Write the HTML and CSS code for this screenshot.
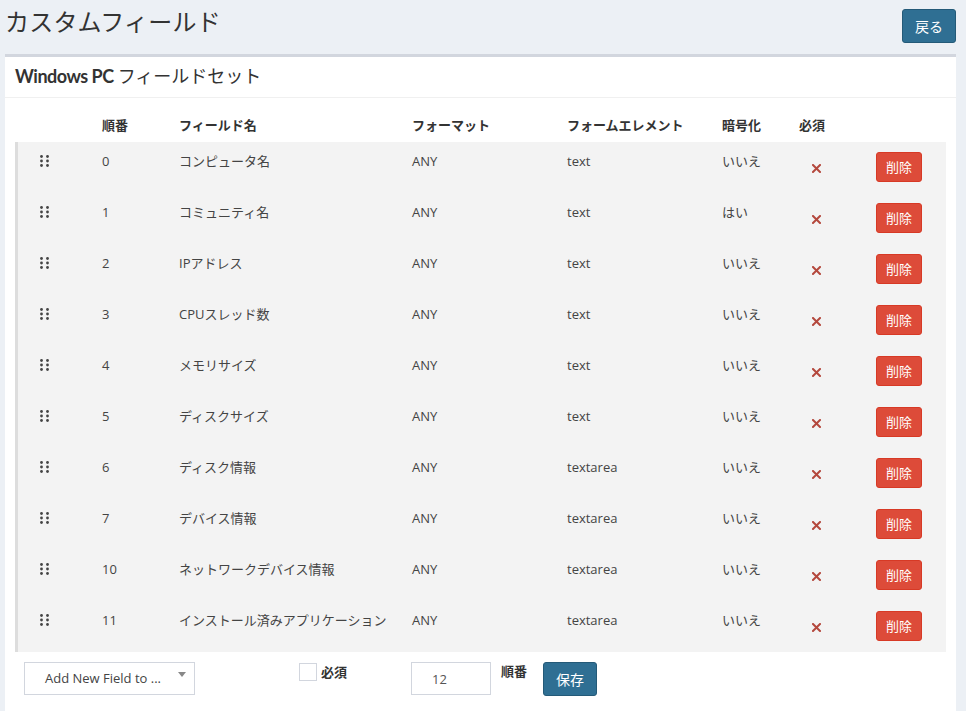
FILE: index.html
```html
<!DOCTYPE html>
<html lang="ja">
<head>
<meta charset="utf-8">
<title>カスタムフィールド</title>
<link rel="stylesheet" href="styles.css">
</head>
<body>
<div class="page">
  <div class="page-head">
    <h1 class="page-title">カスタムフィールド</h1>
    <a class="btn btn-primary btn-back" href="#">戻る</a>
  </div>
  <div class="box">
    <div class="box-header">
      <h2 class="box-title"><span class="latin-bold">Windows PC</span> フィールドセット</h2>
    </div>
    <div class="box-body">
      <div class="grid-row head-row">
        <div></div>
        <div>順番</div>
        <div>フィールド名</div>
        <div>フォーマット</div>
        <div>フォームエレメント</div>
        <div>暗号化</div>
        <div>必須</div>
        <div></div>
      </div>
      <div class="rows">
        <div class="grid-row item">
          <div class="drag"><svg width="10" height="12" viewBox="0 0 10 12"><g fill="#444"><circle cx="1.5" cy="1.5" r="1.4"/><circle cx="7.5" cy="1.5" r="1.4"/><circle cx="1.5" cy="6" r="1.4"/><circle cx="7.5" cy="6" r="1.4"/><circle cx="1.5" cy="10.5" r="1.4"/><circle cx="7.5" cy="10.5" r="1.4"/></g></svg></div>
          <div>0</div><div>コンピュータ名</div><div>ANY</div><div>text</div><div>いいえ</div>
          <div class="req"><svg width="9" height="9" viewBox="0 0 9 9"><path d="M1 1L8 8M8 1L1 8" stroke="#b4483d" stroke-width="2" stroke-linecap="square"/></svg></div>
          <div><a class="btn btn-danger" href="#">削除</a></div>
        </div>
        <div class="grid-row item">
          <div class="drag"><svg width="10" height="12" viewBox="0 0 10 12"><g fill="#444"><circle cx="1.5" cy="1.5" r="1.4"/><circle cx="7.5" cy="1.5" r="1.4"/><circle cx="1.5" cy="6" r="1.4"/><circle cx="7.5" cy="6" r="1.4"/><circle cx="1.5" cy="10.5" r="1.4"/><circle cx="7.5" cy="10.5" r="1.4"/></g></svg></div>
          <div>1</div><div>コミュニティ名</div><div>ANY</div><div>text</div><div>はい</div>
          <div class="req"><svg width="9" height="9" viewBox="0 0 9 9"><path d="M1 1L8 8M8 1L1 8" stroke="#b4483d" stroke-width="2" stroke-linecap="square"/></svg></div>
          <div><a class="btn btn-danger" href="#">削除</a></div>
        </div>
        <div class="grid-row item">
          <div class="drag"><svg width="10" height="12" viewBox="0 0 10 12"><g fill="#444"><circle cx="1.5" cy="1.5" r="1.4"/><circle cx="7.5" cy="1.5" r="1.4"/><circle cx="1.5" cy="6" r="1.4"/><circle cx="7.5" cy="6" r="1.4"/><circle cx="1.5" cy="10.5" r="1.4"/><circle cx="7.5" cy="10.5" r="1.4"/></g></svg></div>
          <div>2</div><div>IPアドレス</div><div>ANY</div><div>text</div><div>いいえ</div>
          <div class="req"><svg width="9" height="9" viewBox="0 0 9 9"><path d="M1 1L8 8M8 1L1 8" stroke="#b4483d" stroke-width="2" stroke-linecap="square"/></svg></div>
          <div><a class="btn btn-danger" href="#">削除</a></div>
        </div>
        <div class="grid-row item">
          <div class="drag"><svg width="10" height="12" viewBox="0 0 10 12"><g fill="#444"><circle cx="1.5" cy="1.5" r="1.4"/><circle cx="7.5" cy="1.5" r="1.4"/><circle cx="1.5" cy="6" r="1.4"/><circle cx="7.5" cy="6" r="1.4"/><circle cx="1.5" cy="10.5" r="1.4"/><circle cx="7.5" cy="10.5" r="1.4"/></g></svg></div>
          <div>3</div><div>CPUスレッド数</div><div>ANY</div><div>text</div><div>いいえ</div>
          <div class="req"><svg width="9" height="9" viewBox="0 0 9 9"><path d="M1 1L8 8M8 1L1 8" stroke="#b4483d" stroke-width="2" stroke-linecap="square"/></svg></div>
          <div><a class="btn btn-danger" href="#">削除</a></div>
        </div>
        <div class="grid-row item">
          <div class="drag"><svg width="10" height="12" viewBox="0 0 10 12"><g fill="#444"><circle cx="1.5" cy="1.5" r="1.4"/><circle cx="7.5" cy="1.5" r="1.4"/><circle cx="1.5" cy="6" r="1.4"/><circle cx="7.5" cy="6" r="1.4"/><circle cx="1.5" cy="10.5" r="1.4"/><circle cx="7.5" cy="10.5" r="1.4"/></g></svg></div>
          <div>4</div><div>メモリサイズ</div><div>ANY</div><div>text</div><div>いいえ</div>
          <div class="req"><svg width="9" height="9" viewBox="0 0 9 9"><path d="M1 1L8 8M8 1L1 8" stroke="#b4483d" stroke-width="2" stroke-linecap="square"/></svg></div>
          <div><a class="btn btn-danger" href="#">削除</a></div>
        </div>
        <div class="grid-row item">
          <div class="drag"><svg width="10" height="12" viewBox="0 0 10 12"><g fill="#444"><circle cx="1.5" cy="1.5" r="1.4"/><circle cx="7.5" cy="1.5" r="1.4"/><circle cx="1.5" cy="6" r="1.4"/><circle cx="7.5" cy="6" r="1.4"/><circle cx="1.5" cy="10.5" r="1.4"/><circle cx="7.5" cy="10.5" r="1.4"/></g></svg></div>
          <div>5</div><div>ディスクサイズ</div><div>ANY</div><div>text</div><div>いいえ</div>
          <div class="req"><svg width="9" height="9" viewBox="0 0 9 9"><path d="M1 1L8 8M8 1L1 8" stroke="#b4483d" stroke-width="2" stroke-linecap="square"/></svg></div>
          <div><a class="btn btn-danger" href="#">削除</a></div>
        </div>
        <div class="grid-row item">
          <div class="drag"><svg width="10" height="12" viewBox="0 0 10 12"><g fill="#444"><circle cx="1.5" cy="1.5" r="1.4"/><circle cx="7.5" cy="1.5" r="1.4"/><circle cx="1.5" cy="6" r="1.4"/><circle cx="7.5" cy="6" r="1.4"/><circle cx="1.5" cy="10.5" r="1.4"/><circle cx="7.5" cy="10.5" r="1.4"/></g></svg></div>
          <div>6</div><div>ディスク情報</div><div>ANY</div><div>textarea</div><div>いいえ</div>
          <div class="req"><svg width="9" height="9" viewBox="0 0 9 9"><path d="M1 1L8 8M8 1L1 8" stroke="#b4483d" stroke-width="2" stroke-linecap="square"/></svg></div>
          <div><a class="btn btn-danger" href="#">削除</a></div>
        </div>
        <div class="grid-row item">
          <div class="drag"><svg width="10" height="12" viewBox="0 0 10 12"><g fill="#444"><circle cx="1.5" cy="1.5" r="1.4"/><circle cx="7.5" cy="1.5" r="1.4"/><circle cx="1.5" cy="6" r="1.4"/><circle cx="7.5" cy="6" r="1.4"/><circle cx="1.5" cy="10.5" r="1.4"/><circle cx="7.5" cy="10.5" r="1.4"/></g></svg></div>
          <div>7</div><div>デバイス情報</div><div>ANY</div><div>textarea</div><div>いいえ</div>
          <div class="req"><svg width="9" height="9" viewBox="0 0 9 9"><path d="M1 1L8 8M8 1L1 8" stroke="#b4483d" stroke-width="2" stroke-linecap="square"/></svg></div>
          <div><a class="btn btn-danger" href="#">削除</a></div>
        </div>
        <div class="grid-row item">
          <div class="drag"><svg width="10" height="12" viewBox="0 0 10 12"><g fill="#444"><circle cx="1.5" cy="1.5" r="1.4"/><circle cx="7.5" cy="1.5" r="1.4"/><circle cx="1.5" cy="6" r="1.4"/><circle cx="7.5" cy="6" r="1.4"/><circle cx="1.5" cy="10.5" r="1.4"/><circle cx="7.5" cy="10.5" r="1.4"/></g></svg></div>
          <div>10</div><div>ネットワークデバイス情報</div><div>ANY</div><div>textarea</div><div>いいえ</div>
          <div class="req"><svg width="9" height="9" viewBox="0 0 9 9"><path d="M1 1L8 8M8 1L1 8" stroke="#b4483d" stroke-width="2" stroke-linecap="square"/></svg></div>
          <div><a class="btn btn-danger" href="#">削除</a></div>
        </div>
        <div class="grid-row item">
          <div class="drag"><svg width="10" height="12" viewBox="0 0 10 12"><g fill="#444"><circle cx="1.5" cy="1.5" r="1.4"/><circle cx="7.5" cy="1.5" r="1.4"/><circle cx="1.5" cy="6" r="1.4"/><circle cx="7.5" cy="6" r="1.4"/><circle cx="1.5" cy="10.5" r="1.4"/><circle cx="7.5" cy="10.5" r="1.4"/></g></svg></div>
          <div>11</div><div>インストール済みアプリケーション</div><div>ANY</div><div>textarea</div><div>いいえ</div>
          <div class="req"><svg width="9" height="9" viewBox="0 0 9 9"><path d="M1 1L8 8M8 1L1 8" stroke="#b4483d" stroke-width="2" stroke-linecap="square"/></svg></div>
          <div><a class="btn btn-danger" href="#">削除</a></div>
        </div>
      </div>
      <form class="add-form">
        <div class="select">
          <span class="select-text">Add New Field to ...</span>
          <span class="select-arrow"></span>
        </div>
        <label class="check-group"><span class="checkbox"></span><span class="bold-label">必須</span></label>
        <div class="order-input">12</div>
        <span class="bold-label order-label">順番</span>
        <button class="btn btn-primary btn-save" type="button">保存</button>
      </form>
    </div>
  </div>
</div>
</body>
</html>
```
FILE: styles.css
```css
* { box-sizing: border-box; }
html, body { margin: 0; padding: 0; }
body {
  background: #ecf0f5;
  font-family: "Open Sans", "Noto Sans CJK JP", sans-serif;
  font-size: 13px;
  color: #333;
  width: 966px;
  height: 711px;
  overflow: hidden;
}
.page { padding: 0 10px 0 5px; }
.page-head {
  display: flex;
  justify-content: space-between;
  align-items: flex-start;
  height: 54px;
}
.page-title {
  margin: 4px 0 0;
  font-family: "Noto Sans CJK JP", sans-serif;
  font-weight: 400;
  font-size: 24px;
  line-height: 34px;
  color: #333;
  letter-spacing: 0.2px;
}
.btn {
  display: inline-flex;
  align-items: center;
  justify-content: center;
  border-radius: 3px;
  color: #fff;
  text-decoration: none;
  font-family: "Noto Sans CJK JP", sans-serif;
  border: 1px solid transparent;
}
.btn-primary { background: #2f6f93; border-color: #245a78; }
.btn-back { margin-top: 9px; width: 54px; height: 34px; font-size: 14px; }
.box {
  background: #fff;
  border-top: 3px solid #d2d6de;
  height: 660px;
}
.box-header {
  padding: 6px 10px 9px;
  border-bottom: 1px solid #f0f0f0;
}
.box-title {
  margin: 0;
  font-family: "Noto Sans CJK JP", sans-serif;
  font-weight: 400;
  font-size: 18px;
  line-height: 24px;
  color: #333;
}
.latin-bold { font-family: "Lato", sans-serif; font-weight: 700; font-size: 18px; letter-spacing: -0.5px; }
.box-body { padding: 10px; }
.grid-row {
  display: grid;
  grid-template-columns: 84px 77px 233px 155px 155px 77px 77px 70px;
}
.head-row {
  padding: 8px 0 8px 3px;
  line-height: 18px;
  font-weight: 700;
  font-family: "Noto Sans CJK JP", sans-serif;
  color: #333;
}
.item {
  background: #f3f3f3;
  border-left: 3px solid #dddddd;
  padding: 10px 0 11px;
  line-height: 18px;
  color: #444;
  align-items: start;
}
.drag { padding-left: 22px; height: 18px; display: flex; align-items: center; }
.drag svg { display: block; }
.req { height: 30px; display: flex; align-items: center; padding-left: 13px; padding-top: 2px; }
.btn-danger {
  width: 46px;
  height: 30px;
  background: #dd4b39;
  border-color: #d73925;
  font-size: 13px;
}
.add-form {
  display: flex;
  align-items: flex-start;
  margin-top: 10px;
  padding-left: 9px;
}
.select {
  width: 171px;
  height: 33px;
  border: 1px solid #d2d6de;
  display: flex;
  align-items: center;
  justify-content: space-between;
  padding: 0 8px 2px 20px;
  color: #444;
  font-size: 13px;
}
.select-arrow {
  width: 0; height: 0;
  border-left: 4px solid transparent;
  border-right: 4px solid transparent;
  border-top: 5px solid #888;
  margin-top: -6px;
}
.check-group {
  display: flex;
  align-items: center;
  margin-left: 104px;
  margin-top: 1px;
  width: 112px;
}
.checkbox {
  width: 18px; height: 18px;
  border: 1px solid #d2d6de;
  background: #fff;
  margin-right: 4px;
}
.bold-label {
  font-family: "Noto Sans CJK JP", sans-serif;
  font-weight: 700;
  font-size: 13px;
  color: #333;
  line-height: 18px;
}
.order-input {
  width: 80px;
  height: 33px;
  border: 1px solid #d2d6de;
  padding: 0 0 0 20px;
  display: flex;
  align-items: center;
  color: #555;
  font-size: 13px;
}
.order-label { margin-left: 10px; margin-top: 0; }
.btn-save {
  margin-left: 16px;
  width: 54px;
  height: 34px;
  font-size: 14px;
  cursor: pointer;
}
```
